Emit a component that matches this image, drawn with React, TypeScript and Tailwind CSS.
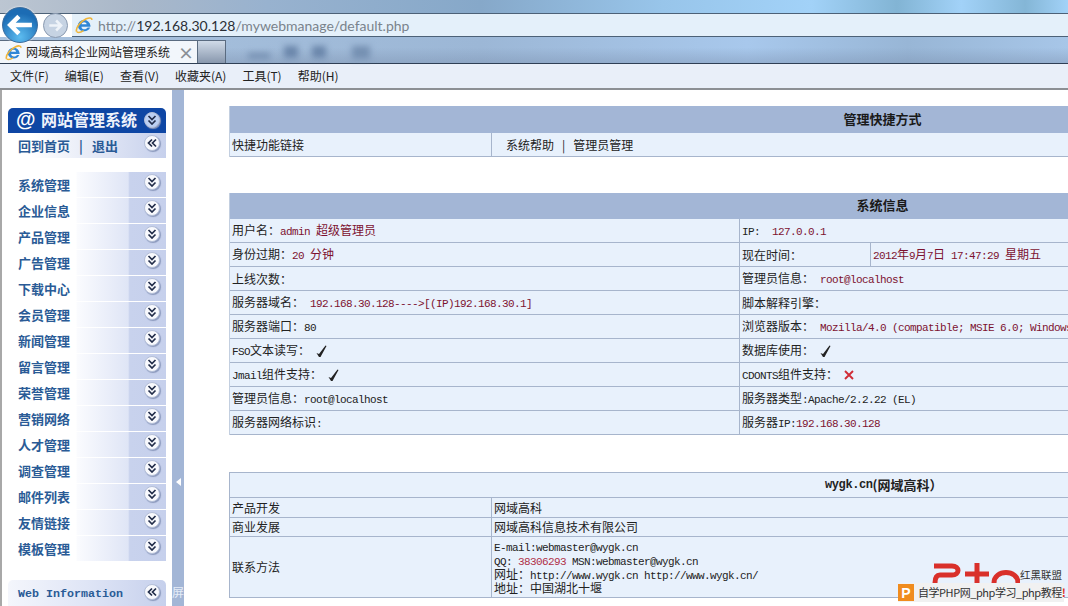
import React from "react";

const CJK = '"Noto Sans CJK SC","Noto Sans",sans-serif';

function IEIcon({ size = 22 }: { size?: number }) {
  return (
    <svg width={size} height={size} viewBox="0 0 24 24" className="shrink-0">
      <path d="M3.5 13.5A8.6 8.6 0 0 1 20.6 12.6v1.6H8.6c.3 4.2 6 4.7 8.3 1.2h3.3c-2.8 7-13.9 6.6-16.2-.9" fill="#2f86d6" />
      <path d="M8.7 10.9c.5-3.6 6.4-3.6 6.9 0z" fill="#f4f9fe" />
      <path d="M2.2 21C0 16 8 7 15 3.8c4-1.8 7.5-1.6 7.6 1.4" fill="none" stroke="#efb53a" strokeWidth="2.2" />
      <path d="M2.4 21.2c2.5 1.6 6.4 0 9-1.8" fill="none" stroke="#efb53a" strokeWidth="2" />
    </svg>
  );
}

function Chevrons({ up = false, color = "#222d4a" }: { up?: boolean; color?: string }) {
  return (
    <svg width="10" height="10" viewBox="0 0 10 10" fill="none" stroke={color} strokeWidth="1.7">
      {up ? (
        <>
          <path d="M5 1.5 1.5 5 5 8.5" />
          <path d="M9 1.5 5.5 5 9 8.5" />
        </>
      ) : (
        <>
          <path d="M1.5 1 5 4.5 8.5 1" />
          <path d="M1.5 5.5 5 9 8.5 5.5" />
        </>
      )}
    </svg>
  );
}

function Round({ up, blue }: { up?: boolean; blue?: boolean }) {
  return (
    <span
      className={
        "flex h-[16px] w-[16px] items-center justify-center rounded-full border border-[#b4bfd8] shadow-[1px_1px_1px_#8a98bc] " +
        (blue ? "bg-[#bcd0f3]" : "bg-[#f8f9fd]")
      }
    >
      <Chevrons up={up} />
    </span>
  );
}

function Check() {
  return (
    <svg width="11" height="12" viewBox="0 0 11 12" className="inline-block align-[-2px]" fill="#222">
      <path d="M.5 8 3 9 9.5.5l1 .5L4.5 12H3z" />
    </svg>
  );
}

function Cross() {
  return (
    <svg width="10" height="10" viewBox="0 0 10 10" className="inline-block align-[-1px]" fill="none" stroke="#d02c36" strokeWidth="1.9">
      <path d="M1 1l8 8M9 1 1 9" />
    </svg>
  );
}

function L({ children, red }: { children: React.ReactNode; red?: boolean }) {
  return (
    <span className={"text-[11px] tracking-[-0.6px] font-['Liberation_Mono'] " + (red ? "text-[#7d1230]" : "text-[#222]")}>
      {children}
    </span>
  );
}

function R({ children }: { children: React.ReactNode }) {
  return <span className="text-[#7d1230]">{children}</span>;
}

const S = <L> </L>;

const menu = ["系统管理", "企业信息", "产品管理", "广告管理", "下载中心", "会员管理", "新闻管理", "留言管理", "荣誉管理", "营销网络", "人才管理", "调查管理", "邮件列表", "友情链接", "模板管理"];

const rowBg =
  "bg-[linear-gradient(90deg,#fff_0,#fff_43%,#fafbfe_44%,#dfe5f6_76%,#c8d2ed_77%,#c6d0ec_100%)]";

function Side() {
  return (
    <div className="flex h-full w-[172px] shrink-0 flex-col overflow-hidden border-l-2 border-[#a8a8a8] bg-white pl-[6px] pt-[18px]">
      <div className="flex h-[25px] w-[158px] items-center rounded-t-[5px] bg-[#0e46a4] pl-[8px] pr-[6px] text-white">
        <span className="-mt-[3px] w-[25px] text-[20px] font-bold leading-none font-['Liberation_Sans']">@</span>
        <span className="-mt-[4px] flex-1 text-[16px] font-bold leading-none text-[#eef2fb]">网站管理系统</span>
        <span className="-mt-[2px]">
          <Round blue />
        </span>
      </div>
      <div className="flex h-[25px] w-[158px] items-center bg-[linear-gradient(90deg,#fff_0,#fff_15%,#c6d0ec_100%)] pl-[10px] pr-[6px] text-[13px] font-bold text-[#2a5b96]">
        <span>回到首页</span>
        <span className="mx-[9px]">|</span>
        <span className="flex-1">退出</span>
        <span className="-mt-[5px]">
          <Round up />
        </span>
      </div>
      <div className="mt-[14px] flex w-[158px] flex-col gap-[1px]">
        {menu.map((m) => (
          <div key={m} className={"flex h-[25px] items-center justify-between pl-[10px] pr-[6px] text-[13px] font-bold text-[#2a5b96] " + rowBg}>
            <span>{m}</span>
            <span className="-mt-[5px]">
              <Round />
            </span>
          </div>
        ))}
      </div>
      <div className="mt-[19px] flex h-[26px] w-[158px] shrink-0 items-center justify-between rounded-t-[5px] bg-[linear-gradient(90deg,#f4f6fc_0,#dfe5f6_50%,#c6d0ec_100%)] pl-[10px] pr-[6px]">
        <span className="pt-[3px] text-[11.67px] font-bold text-[#2a5b96] font-['Liberation_Mono']">Web Information</span>
        <span className="-mt-[3px]">
          <Round up />
        </span>
      </div>
    </div>
  );
}

function Splitter() {
  return (
    <div className="flex h-full w-[12px] shrink-0 flex-col items-center bg-[#a3b6d6]">
      <div className="mt-[388px] h-0 w-0 border-y-[4px] border-r-[5px] border-y-transparent border-r-white" />
      <span className="mt-[100px] text-[12px] leading-none text-[#e6edf8]">屏</span>
    </div>
  );
}

const border = "border-[#a7b5cc]";

function Row({ h = 24, children }: { h?: number; children: React.ReactNode }) {
  return (
    <div className={"flex shrink-0 border-b bg-[#e8f1fc] text-[12px] text-[#222] " + border} style={{ height: h }}>
      {children}
    </div>
  );
}

function Cell({ w, children, last }: { w?: number; children?: React.ReactNode; last?: boolean }) {
  return (
    <div
      className={"flex items-center whitespace-pre pl-[2px] " + (last ? "" : "border-r " + border)}
      style={w ? { width: w } : undefined}
    >
      <span>{children}</span>
    </div>
  );
}

function Table({ title, h, children, className = "" }: { title: string; h: number; children: React.ReactNode; className?: string }) {
  return (
    <div className={"flex w-[1306px] shrink-0 flex-col border-l border-[#c3cfe0] " + className}>
      <div className="flex shrink-0 items-center justify-center bg-[#a3b6d6] pb-[2px] text-[13px] font-bold text-[#1a1a1a]" style={{ height: h }}>
        {title}
      </div>
      {children}
    </div>
  );
}

function Two({ a, b }: { a: React.ReactNode; b: React.ReactNode }) {
  return (
    <Row>
      <Cell w={510}>{a}</Cell>
      <Cell last>{b}</Cell>
    </Row>
  );
}

function Content() {
  return (
    <div className="flex min-w-0 flex-1 flex-col overflow-hidden bg-white pl-[45px] pt-[16px]">
      <Table title="管理快捷方式" h={27}>
        <Row h={24}>
          <Cell w={262}>快捷功能链接</Cell>
          <div className="flex items-center pl-[14px]">
            <span>系统帮助</span>
            <span className="mx-[8px]">|</span>
            <span>管理员管理</span>
          </div>
        </Row>
      </Table>
      <Table title="系统信息" h={26} className="mt-[36px]">
        <Two a={<>用户名：<L red>admin</L>{S}<R>超级管理员</R></>} b={<><L>IP:  </L><L red>127.0.0.1</L></>} />
        <Row>
          <Cell w={510}>身份过期：<L red>20</L>{S}<R>分钟</R></Cell>
          <Cell w={131}>现在时间：</Cell>
          <Cell last>
            <L red>2012</L><R>年</R><L red>9</L><R>月</R><L red>7</L><R>日</R><L red> 17:47:29 </L><R>星期五</R>
          </Cell>
        </Row>
        <Two a="上线次数：" b={<>管理员信息：<L red> root@localhost</L></>} />
        <Two a={<>服务器域名：<L red> 192.168.30.128----&gt;[(IP)192.168.30.1]</L></>} b="脚本解释引擎：" />
        <Two a={<>服务器端口：<L>80</L></>} b={<>浏览器版本：<L red> Mozilla/4.0 (compatible; MSIE 6.0; Windows NT 6.1)</L></>} />
        <Two a={<><L>FSO</L>文本读写：<L> </L><Check /></>} b={<>数据库使用：<L> </L><Check /></>} />
        <Two a={<><L>Jmail</L>组件支持：<L> </L><Check /></>} b={<><L>CDONTS</L>组件支持：<L> </L><Cross /></>} />
        <Two a={<>管理员信息：<L>root@localhost</L></>} b={<>服务器类型<L>:Apache/2.2.22 (EL)</L></>} />
        <Two a={<>服务器网络标识<L>:</L></>} b={<>服务器<L>IP:</L><L red>192.168.30.128</L></>} />
      </Table>
      <div className="mt-[37px] flex w-[1306px] shrink-0 flex-col border-l border-t border-[#a7b5cc] text-[12px] text-[#222]">
        <div className={"flex h-[25px] shrink-0 items-center border-b bg-[#e8f1fc] pl-[595px] " + border}>
          <span className="text-[12px] font-bold tracking-[-0.4px] font-['Liberation_Mono']">wygk.cn</span>
          <span className="text-[13px] font-bold">(网域高科）</span>
        </div>
        <Row h={20}>
          <Cell w={262}>产品开发</Cell>
          <Cell last>网域高科</Cell>
        </Row>
        <Row h={19}>
          <Cell w={262}>商业发展</Cell>
          <Cell last>网域高科信息技术有限公司</Cell>
        </Row>
        <Row h={61}>
          <Cell w={262}>联系方法</Cell>
          <div className="flex flex-col justify-center whitespace-pre pl-[2px]">
            <div className="h-[14px] leading-[14px]"><L>E-mail:webmaster@wygk.cn</L></div>
            <div className="h-[14px] leading-[14px]"><L>QQ: </L><span className="text-[11px] tracking-[-0.6px] text-[#b03048] font-['Liberation_Mono']">38306293</span><L> MSN:webmaster@wygk.cn</L></div>
            <div className="h-[14px] leading-[14px]">网址：<L>http://www.wygk.cn http://www.wygk.cn/</L></div>
            <div className="h-[14px] leading-[14px]">地址：中国湖北十堰</div>
          </div>
        </Row>
      </div>
    </div>
  );
}

function Chrome() {
  return (
    <div className="flex h-[90px] shrink-0 flex-col">
      <div className="h-[37px] shrink-0">
        <div className="h-[14px] border-b border-[#4c6177] bg-[linear-gradient(90deg,#bcc6d2_0,#aab8c9_12%,#98b2cf_25%,#86a8c9_45%,#98c5ea_62%,#a2d2f8_76%,#82b4d4_84%,#a2d2f8_90%,#84b6d6_96%,#a2d2f8_100%)]" />
        <div className="ml-[72px] flex h-[23px] items-center gap-[3px] border-b border-[#4c6177] bg-[#e4f0fa] pl-[3px] text-[14px] font-['Lato']">
          <IEIcon size={18} />
          <span className="ml-[2px] text-[#7a838c]">http://</span>
          <span className="-ml-[3px] text-[#2b2f36]">192.168.30.128</span>
          <span className="-ml-[3px] text-[#7a838c]">/mywebmanage/default.php</span>
        </div>
      </div>
      <div className="flex h-[27px] shrink-0 items-end border-b border-[#2f3f55] bg-[linear-gradient(180deg,transparent_40%,rgba(120,140,170,.4)),linear-gradient(90deg,#a9c2de_0,#9cb7d6_45%,#a8c8ec_70%,#98b6d6_85%,#a7c6e8_100%)]">
        <div className="flex h-[23px] w-[198px] items-center border-r border-t border-[#5a6b80] bg-[#f2f6fb] pl-[5px] text-[12px] text-[#222]">
          <IEIcon size={17} />
          <span className="ml-[4px] flex-1 whitespace-nowrap">网域高科企业网站管理系统</span>
          <span className="mr-[3px] text-[16px] font-bold leading-none text-[#8a8f96]">×</span>
        </div>
        <div className="h-[23px] w-[28px] border-r border-t border-[#5a6b80] bg-[linear-gradient(180deg,#d0dbe8,#8897ad)]" />
        <div className="mb-[4px] ml-[22px] flex items-center gap-[14px] blur-[3px]">
          <span className="mt-[8px] h-[6px] w-[22px] bg-[#7590b2]" />
          <span className="h-[12px] w-[14px] bg-[#6a86aa]" />
          <span className="h-[12px] w-[14px] bg-[#6a86aa]" />
          <span className="ml-[12px] h-[13px] w-[18px] bg-[#7590b2]" />
        </div>
      </div>
      <div className="flex h-[24px] shrink-0 items-center gap-[16px] bg-[#e9eff9] pl-[10px] text-[12px] text-[#222]">
        {["文件(F)", "编辑(E)", "查看(V)", "收藏夹(A)", "工具(T)", "帮助(H)"].map((t) => (
          <span key={t}>{t}</span>
        ))}
      </div>
      <div className="h-[2px] shrink-0 bg-[#8c8f94]" />
    </div>
  );
}

function Watermark() {
  return (
    <div className="absolute bottom-[4px] left-[898px] w-[166px]">
      <div className="flex items-end pl-[34px]">
        <svg width="88" height="20" viewBox="0 0 88 20" fill="none" stroke="#d9302a" strokeWidth="5">
          <path d="M2 3h18c8 0 8 9 0 9H8c-4 0-5 3-5 8" />
          <path d="M33 11h24M45 0v20" />
          <path d="M62 20c0-14 24-14 24 0" />
        </svg>
        <span className="mb-[2px] whitespace-nowrap text-[10.5px] leading-[12px] text-[#333]">红黑联盟</span>
      </div>
      <div className="flex h-[19px] items-center bg-[#f1f1f1] text-[11px] text-[#333]">
        <span className="flex h-[17px] w-[16px] shrink-0 items-center justify-center bg-[#f08c1e] text-[14px] font-bold leading-none text-white font-['Liberation_Sans']">P</span>
        <span className="ml-[4px] whitespace-nowrap tracking-[-0.45px]">自学PHP网_php学习_php教程</span>
        <span className="font-bold text-[#d9302a]">!</span>
      </div>
    </div>
  );
}

export default function App() {
  return (
    <div className="relative flex h-[606px] w-[1068px] flex-col overflow-hidden bg-white" style={{ fontFamily: CJK }}>
      <Chrome />
      <div className="flex min-h-0 flex-1">
        <Side />
        <Splitter />
        <Content />
      </div>
      {/* navigation buttons lie over the toolbar */}
      <div className="absolute left-[2px] top-[7px] flex h-[36px] w-[36px] items-center justify-center rounded-full border border-[#3a6c9e] bg-[radial-gradient(circle_at_50%_85%,#5cbcf0,#1c6cb4_70%)] shadow-[0_0_2px_#fff]">
        <svg width="26" height="22" viewBox="0 0 24 20" fill="none" stroke="#fff" strokeWidth="4.2">
          <path d="M11 2 3 10l8 8M4 10h19" />
        </svg>
      </div>
      <div className="absolute left-[43px] top-[13px] flex h-[25px] w-[25px] items-center justify-center rounded-full border border-[#8a9ab0] bg-[#c6d3e3]">
        <svg width="15" height="13" viewBox="0 0 24 20" fill="none" stroke="#eef3f9" strokeWidth="4">
          <path d="M13 2l8 8-8 8M20 10H2" />
        </svg>
      </div>
      <Watermark />
    </div>
  );
}
